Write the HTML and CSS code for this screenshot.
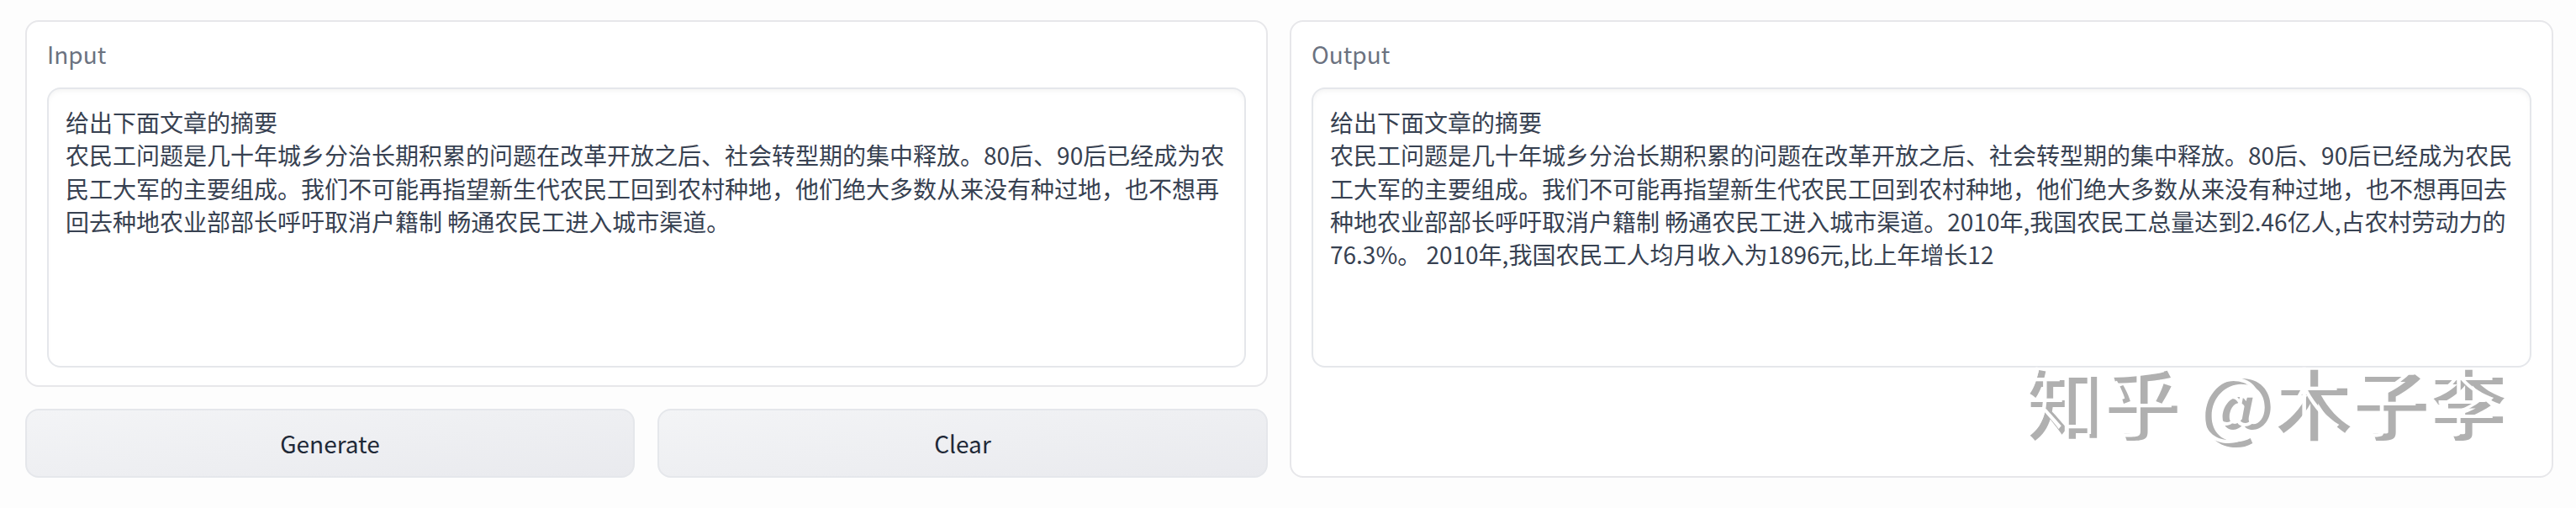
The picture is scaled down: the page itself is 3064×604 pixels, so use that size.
FILE: index.html
```html
<!DOCTYPE html>
<html lang="zh">
<head>
<meta charset="utf-8">
<title>Summary demo</title>
<link rel="stylesheet" href="styles.css">
</head>
<body>
<div class="page">
  <div class="col col-left">
    <div class="panel panel-input">
      <div class="label">Input</div>
      <div class="textbox">
        <div class="line">给出下面文章的摘要</div>
        <div class="line">农民工问题是几十年城乡分治长期积累的问题在改革开放之后、社会转型期的集中释放。80后、90后已经成为农</div>
        <div class="line">民工大军的主要组成。我们不可能再指望新生代农民工回到农村种地，他们绝大多数从来没有种过地，也不想再</div>
        <div class="line">回去种地农业部部长呼吁取消户籍制 畅通农民工进入城市渠道。</div>
      </div>
    </div>
    <div class="buttons">
      <button class="btn">Generate</button>
      <button class="btn">Clear</button>
    </div>
  </div>
  <div class="col col-right">
    <div class="panel panel-output">
      <div class="label">Output</div>
      <div class="textbox">
        <div class="line">给出下面文章的摘要</div>
        <div class="line">农民工问题是几十年城乡分治长期积累的问题在改革开放之后、社会转型期的集中释放。80后、90后已经成为农民</div>
        <div class="line">工大军的主要组成。我们不可能再指望新生代农民工回到农村种地，他们绝大多数从来没有种过地，也不想再回去</div>
        <div class="line">种地农业部部长呼吁取消户籍制 畅通农民工进入城市渠道。2010年,我国农民工总量达到2.46亿人,占农村劳动力的</div>
        <div class="line">76.3%。 2010年,我国农民工人均月收入为1896元,比上年增长12</div>
      </div>
    </div>
  </div>
</div>
<div class="watermark" data-text="知乎 @木子李">知乎 @木子李</div>
</body>
</html>
```
FILE: styles.css
```css
html, body {
  margin: 0;
  padding: 0;
}
body {
  position: relative;
  width: 3064px;
  height: 604px;
  overflow: hidden;
  background: #fdfdfd;
  font-family: "Noto Sans CJK SC", "Noto Sans", sans-serif;
  color: #374151;
}
.page {
  display: grid;
  grid-template-columns: 1478px 1503px;
  column-gap: 26px;
  padding: 24px 27px 0 30px;
  align-items: start;
}
.col {
  display: flex;
  flex-direction: column;
  gap: 26px;
}
.panel {
  box-sizing: border-box;
  background: #ffffff;
  border: 2px solid #e7e7ea;
  border-radius: 16px;
  padding: 18px 24px 0 24px;
}
.panel-input {
  height: 436px;
}
.panel-output {
  height: 544px;
}
.label {
  font-size: 28px;
  line-height: 40px;
  color: #6b7280;
  margin-bottom: 20px;
}
.textbox {
  box-sizing: border-box;
  height: 333px;
  background: #ffffff;
  border: 2px solid #e5e7eb;
  border-radius: 16px;
  box-shadow: inset 0 4px 6px -2px rgba(0, 0, 0, 0.05);
  padding: 20px 20px;
  overflow: hidden;
  font-size: 28px;
  line-height: 39.3px;
  color: #374151;
}
.line {
  white-space: nowrap;
}
.buttons {
  display: grid;
  grid-template-columns: 725px 726px;
  column-gap: 27px;
}
.btn {
  box-sizing: border-box;
  height: 82px;
  border: 2px solid #e5e7eb;
  border-radius: 16px;
  background: linear-gradient(to bottom right, #f3f4f6, #e9eaee);
  font-family: "Noto Sans CJK SC", "Noto Sans", sans-serif;
  font-size: 28px;
  color: #1f2937;
  padding: 0;
}
.watermark {
  position: absolute;
  left: 2412px;
  top: 432px;
  font-size: 90px;
  line-height: 90px;
  font-weight: 500;
  letter-spacing: 2px;
  color: #b0b0b0;
  white-space: nowrap;
}
.watermark::after {
  content: attr(data-text);
  position: absolute;
  left: -6px;
  top: -4px;
  color: #ffffff;
  font-weight: 300;
  white-space: nowrap;
}
```
